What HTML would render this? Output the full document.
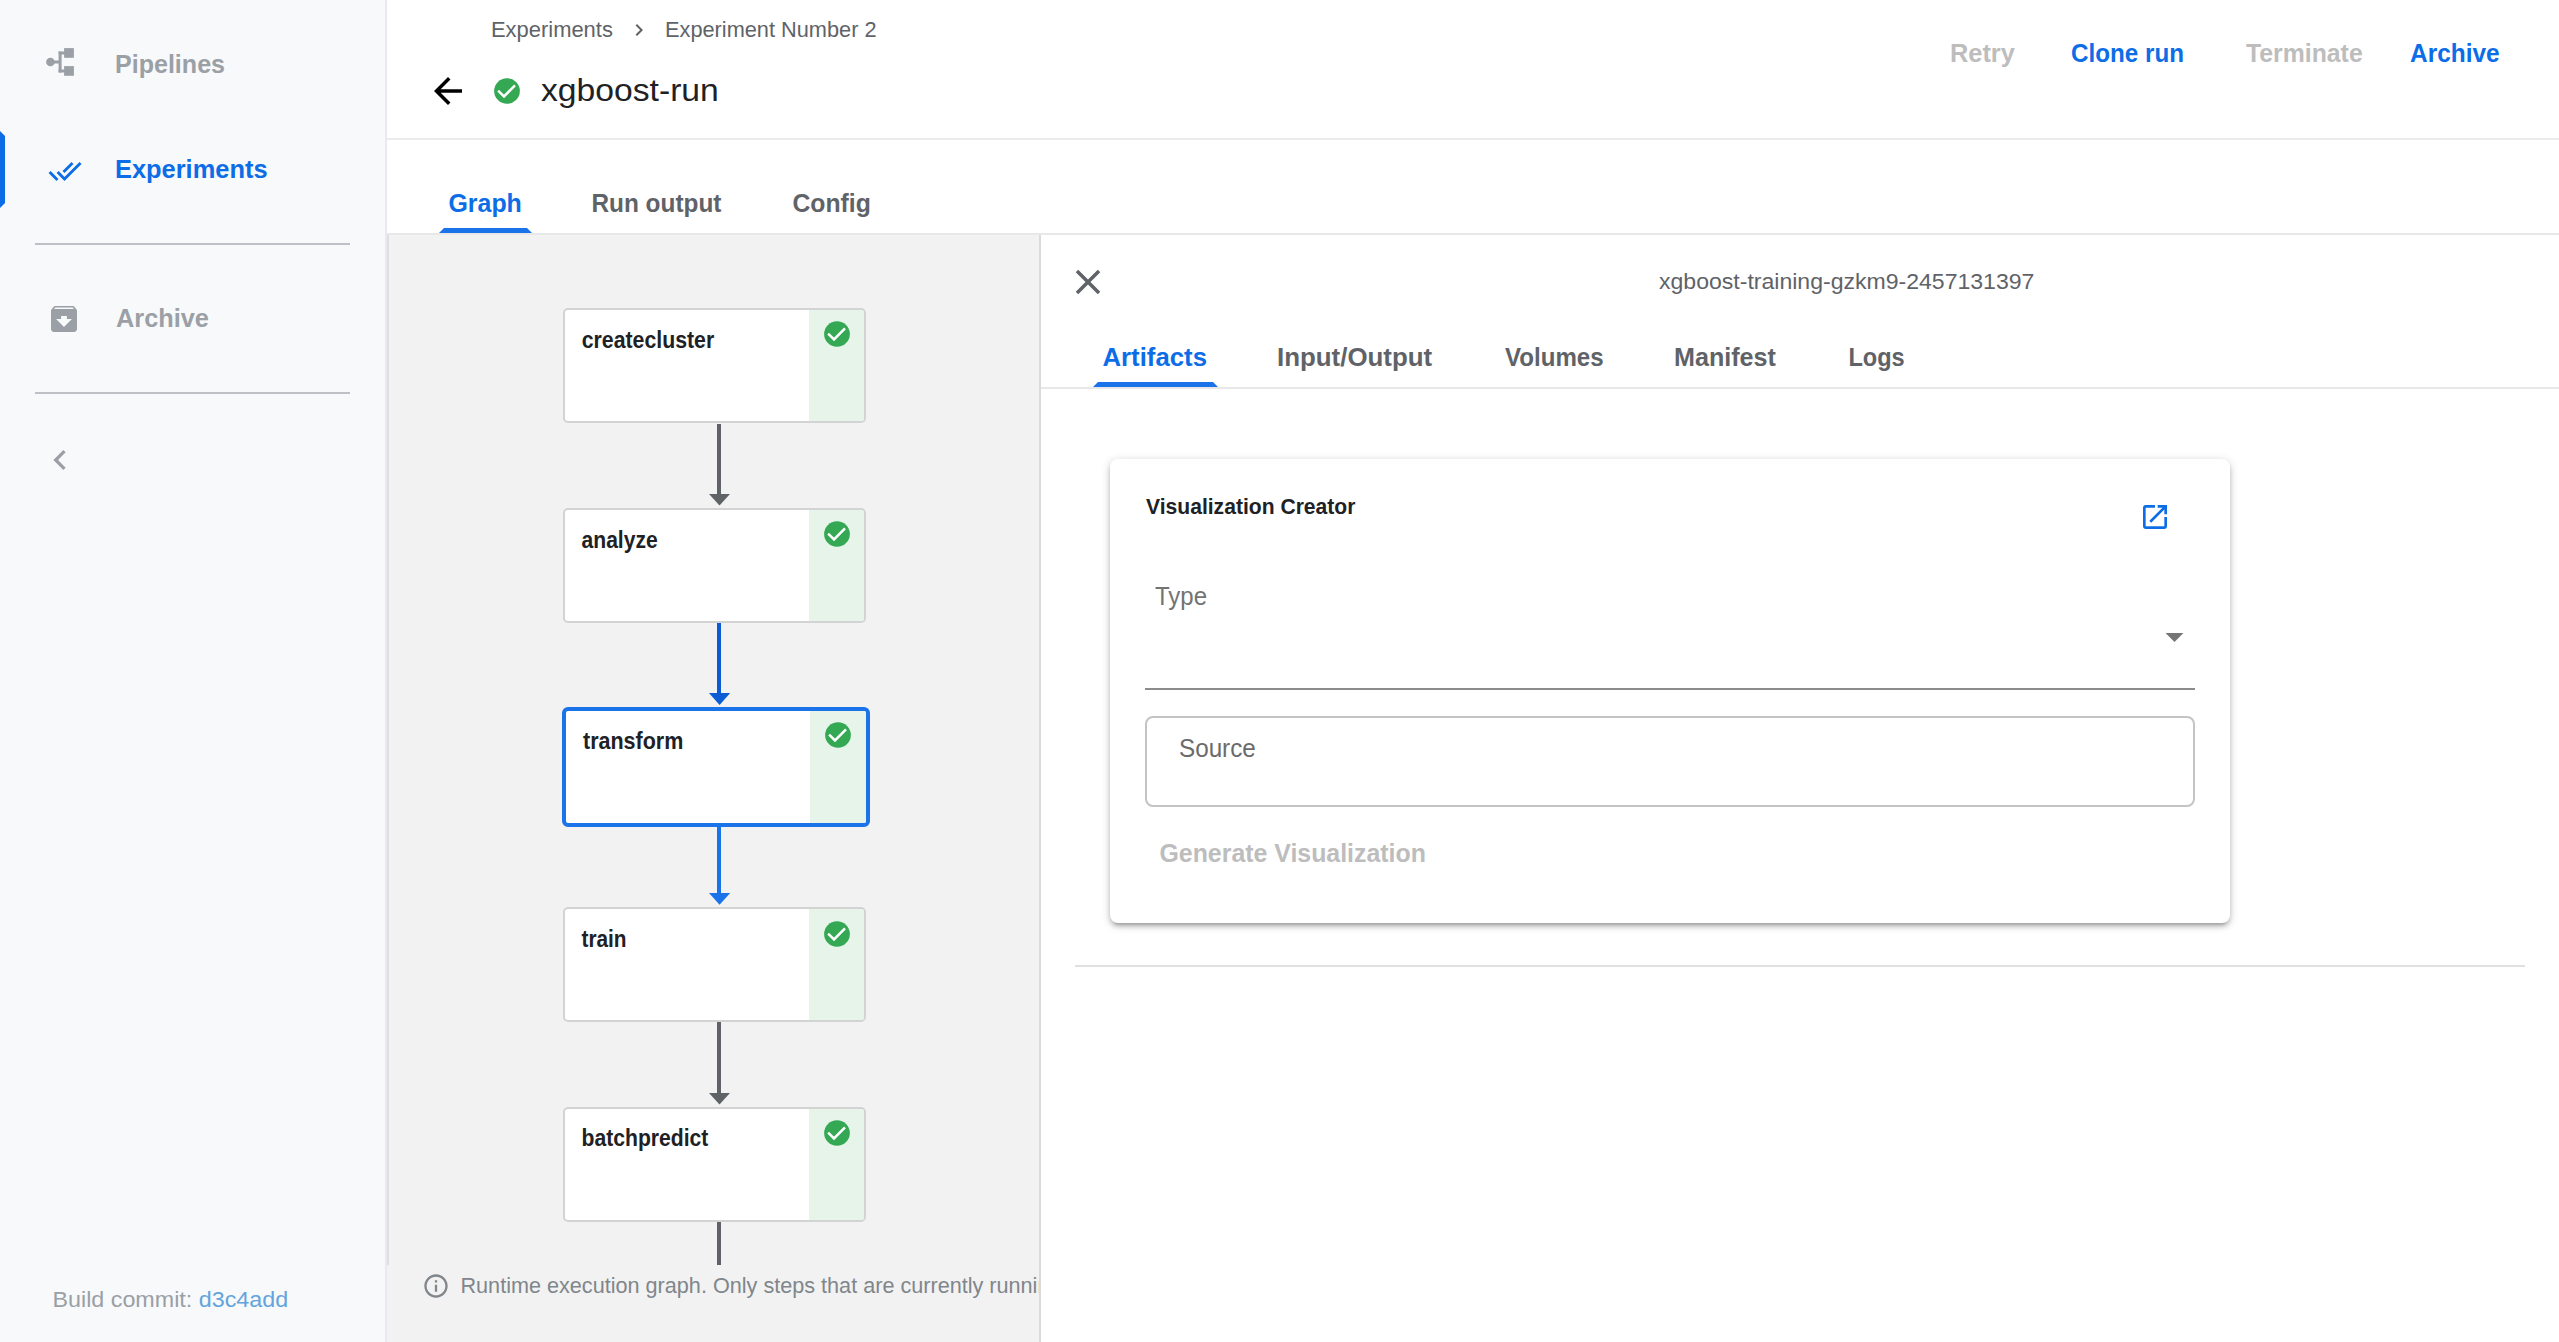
<!DOCTYPE html>
<html><head><meta charset="utf-8">
<style>
html,body{margin:0;padding:0;}
body{width:2559px;height:1342px;overflow:hidden;position:relative;background:#fff;font-family:"Liberation Sans",sans-serif;}
.a{position:absolute;}
.t{position:absolute;white-space:nowrap;line-height:1;transform-origin:0 85%;}
.b{font-weight:bold;}
svg{position:absolute;display:block;}
.node{width:299px;height:111px;border:2px solid #d3d3d3;border-radius:5px;background:#fff;overflow:hidden;}
.node.sel{width:300px;height:112px;border:4px solid #1a73e8;border-radius:6px;}
.node.sel .strip{width:56px;}
.strip{position:absolute;right:0;top:0;bottom:0;width:55px;background:#e6f4ea;}

</style></head><body>

<!-- SIDEBAR -->
<div class="a" style="left:0;top:0;width:385px;height:1342px;background:#f8f9fa;"></div>
<div class="a" style="left:385px;top:0;width:2px;height:1342px;background:#e8eaed;"></div>
<div class="a" style="left:0;top:131px;width:5px;height:77px;background:#0d6de7;clip-path:polygon(0 0,5px 5px,5px 72px,0 77px);"></div>

<!-- pipelines icon -->
<svg style="left:44px;top:46px" width="32" height="32" viewBox="44 46 32 32">
  <circle cx="50.4" cy="62" r="4.3" fill="#9aa0a6"/>
  <rect x="50" y="60.5" width="10" height="3" fill="#9aa0a6"/>
  <rect x="58.6" y="51.5" width="3" height="21" fill="#9aa0a6"/>
  <rect x="58.6" y="51.5" width="7" height="3" fill="#9aa0a6"/>
  <rect x="58.6" y="69.5" width="7" height="3" fill="#9aa0a6"/>
  <rect x="64.1" y="48.1" width="9.8" height="9.7" fill="#9aa0a6"/>
  <rect x="64.1" y="66.1" width="9.8" height="9.7" fill="#9aa0a6"/>
</svg>
<div class="t b" id="nav1" style="left:114.97px;top:51.87px;font-size:25.079px;color:#9aa0a6;transform:scaleY(1.0633);">Pipelines</div>

<!-- experiments icon -->
<svg style="left:47.5px;top:153.5px" width="34" height="34" viewBox="0 0 24 24">
  <path fill="#0d6de7" d="M18 7l-1.41-1.41-6.34 6.34 1.41 1.41L18 7zm4.24-1.41L11.66 16.17 7.48 12l-1.41 1.41L11.66 19l12-12-1.42-1.41zM.41 13.41L6 19l1.41-1.41L1.83 12 .41 13.41z"/>
</svg>
<div class="t b" id="nav2" style="left:114.98px;top:157.46px;font-size:25.436px;color:#0d6de7;transform:scaleY(1.0313);">Experiments</div>

<div class="a" style="left:35px;top:243px;width:315px;height:2px;background:#bdc1c6;"></div>

<!-- archive icon -->
<svg style="left:50.5px;top:306.4px" width="26" height="26" viewBox="3 3 18 18">
  <path fill="#9aa0a6" d="M20.54 5.23l-1.39-1.68C18.88 3.21 18.47 3 18 3H6c-.47 0-.88.21-1.16.55L3.46 5.23C3.17 5.57 3 6.02 3 6.5V19c0 1.1.9 2 2 2h14c1.1 0 2-.9 2-2V6.5c0-.48-.17-.93-.46-1.27zM12 17.5L6.5 12H10v-2h4v2h3.5L12 17.5zM5.12 5l.81-1h12l.94 1H5.12z"/>
</svg>
<div class="t b" id="nav3" style="left:116.00px;top:305.55px;font-size:25.339px;color:#9aa0a6;transform:scaleY(1.0295);">Archive</div>

<div class="a" style="left:35px;top:392px;width:315px;height:2px;background:#bdc1c6;"></div>

<!-- collapse chevron -->
<svg style="left:39.6px;top:440px" width="40" height="40" viewBox="0 0 24 24">
  <path fill="#9aa0a6" d="M15.41 7.41L14 6l-6 6 6 6 1.41-1.41L10.83 12z"/>
</svg>

<div class="t" id="build" style="left:52.49px;top:1288.17px;font-size:23.300px;color:#9aa0a6;transform:scaleY(0.9330);">Build commit: <span style="color:#64a4dc">d3c4add</span></div>

<!-- HEADER -->
<div class="a" style="left:387px;top:138px;width:2172px;height:2px;background:#ebebeb;"></div>
<div class="t" id="bc1" style="left:490.97px;top:18.61px;font-size:21.956px;color:#5f6368;transform:scaleY(0.9901);">Experiments</div>
<svg style="left:627px;top:18px" width="24" height="24" viewBox="0 0 24 24"><path fill="#5f6368" d="M10 6L8.59 7.41 13.17 12l-4.58 4.59L10 18l6-6z"/></svg>
<div class="t" id="bc2" style="left:665.00px;top:18.78px;font-size:21.756px;color:#5f6368;transform:scaleY(0.9992);">Experiment Number 2</div>

<svg style="left:427px;top:70px" width="42" height="42" viewBox="0 0 24 24"><path fill="#000" d="M20 11H7.83l5.59-5.59L12 4l-8 8 8 8 1.41-1.41L7.83 13H20v-2z"/></svg>
<svg style="left:494.4px;top:77.6px" width="26" height="26" viewBox="0 0 26 26"><circle cx="13" cy="13" r="12.85" fill="#34a853"/><polyline points="4.1,12.7 10.0,18.5 21.0,7.3" fill="none" stroke="#fff" stroke-width="2.5"/></svg>
<div class="t" id="title" style="left:541.00px;top:72.98px;font-size:33.683px;color:#202124;transform:scaleY(0.9419);">xgboost-run</div>

<div class="t b" id="btn1" style="left:1949.96px;top:41.19px;font-size:25.403px;color:#bdbdbd;transform:scaleY(1.0098);">Retry</div>
<div class="t b" id="btn2" style="left:2070.97px;top:42.19px;font-size:24.221px;color:#0d6de7;transform:scaleY(1.0591);">Clone run</div>
<div class="t b" id="btn3" style="left:2246.00px;top:41.70px;font-size:24.801px;color:#bdbdbd;transform:scaleY(1.0343);">Terminate</div>
<div class="t b" id="btn4" style="left:2410.00px;top:42.01px;font-size:24.439px;color:#0d6de7;transform:scaleY(1.0496);">Archive</div>

<!-- TABS -->
<div class="t b" id="tab1" style="left:448.47px;top:191.29px;font-size:24.927px;color:#0d6de7;transform:scaleY(1.0291);">Graph</div>
<div class="t b" id="tab2" style="left:591.48px;top:191.75px;font-size:24.384px;color:#5f6368;transform:scaleY(1.0520);">Run output</div>
<div class="t b" id="tab3" style="left:792.49px;top:192.44px;font-size:24.755px;color:#5f6368;transform:scaleY(1.0363);">Config</div>
<div class="a" style="left:439px;top:228px;width:93px;height:5px;background:#1a73e8;clip-path:polygon(5px 0,88px 0,93px 5px,0 5px);"></div>
<div class="a" style="left:387px;top:233px;width:2172px;height:2px;background:#e8e8e8;"></div>

<!-- GRAPH AREA -->
<div class="a" id="graph" style="left:387px;top:235px;width:652px;height:1107px;background:#f2f2f2;"></div>
<div class="a" style="left:387px;top:235px;width:2px;height:1030px;background:#dfdfdf;"></div>

<!-- nodes -->
<div class="a node" style="left:563px;top:308px;"><div class="strip"></div></div>
<div class="a node" style="left:563px;top:508px;"><div class="strip"></div></div>
<div class="a node sel" style="left:562px;top:707px;"><div class="strip"></div></div>
<div class="a node" style="left:563px;top:907px;"><div class="strip"></div></div>
<div class="a node" style="left:563px;top:1107px;"><div class="strip"></div></div>

<svg style="left:823.7px;top:321.2px" width="26" height="26" viewBox="0 0 26 26"><circle cx="13" cy="13" r="12.85" fill="#34a853"/><polyline points="4.1,12.7 10.0,18.5 21.0,7.3" fill="none" stroke="#fff" stroke-width="2.5"/></svg>
<svg style="left:823.7px;top:521.2px" width="26" height="26" viewBox="0 0 26 26"><circle cx="13" cy="13" r="12.85" fill="#34a853"/><polyline points="4.1,12.7 10.0,18.5 21.0,7.3" fill="none" stroke="#fff" stroke-width="2.5"/></svg>
<svg style="left:825.4px;top:722.0px" width="26" height="26" viewBox="0 0 26 26"><circle cx="13" cy="13" r="12.85" fill="#34a853"/><polyline points="4.1,12.7 10.0,18.5 21.0,7.3" fill="none" stroke="#fff" stroke-width="2.5"/></svg>
<svg style="left:823.7px;top:920.7px" width="26" height="26" viewBox="0 0 26 26"><circle cx="13" cy="13" r="12.85" fill="#34a853"/><polyline points="4.1,12.7 10.0,18.5 21.0,7.3" fill="none" stroke="#fff" stroke-width="2.5"/></svg>
<svg style="left:823.7px;top:1119.6px" width="26" height="26" viewBox="0 0 26 26"><circle cx="13" cy="13" r="12.85" fill="#34a853"/><polyline points="4.1,12.7 10.0,18.5 21.0,7.3" fill="none" stroke="#fff" stroke-width="2.5"/></svg>

<div class="t b" id="n1" style="left:581.75px;top:330.78px;font-size:21.281px;color:#202124;transform:scaleY(1.1018);">createcluster</div>
<div class="t b" id="n2" style="left:581.50px;top:529.91px;font-size:21.124px;color:#202124;transform:scaleY(1.1100);">analyze</div>
<div class="t b" id="n3" style="left:582.99px;top:731.69px;font-size:21.511px;color:#202124;transform:scaleY(1.1093);">transform</div>
<div class="t b" id="n4" style="left:581.49px;top:930.37px;font-size:20.826px;color:#202124;transform:scaleY(1.1259);">train</div>
<div class="t b" id="n5" style="left:581.51px;top:1127.84px;font-size:21.151px;color:#202124;transform:scaleY(1.1086);">batchpredict</div>

<!-- edges -->
<svg style="left:700px;top:420px" width="40" height="850" viewBox="700 420 40 850">
  <rect x="717" y="424" width="4" height="71" fill="#5f6368"/>
  <path d="M709 494 L730 494 L719.5 505.5 Z" fill="#5f6368"/>
  <rect x="717" y="623" width="4" height="71" fill="#0b5cd5"/>
  <path d="M709 693 L730.2 693 L719.6 705 Z" fill="#0b5cd5"/>
  <rect x="717" y="826" width="4" height="68" fill="#1a73e8"/>
  <path d="M709 893 L730.2 893 L719.6 904.8 Z" fill="#1a73e8"/>
  <rect x="717" y="1022" width="4" height="72" fill="#5f6368"/>
  <path d="M709 1093 L730 1093 L719.5 1104.5 Z" fill="#5f6368"/>
  <rect x="717" y="1222" width="4" height="43" fill="#5f6368"/>
</svg>

<svg style="left:422px;top:1272px" width="28" height="28" viewBox="0 0 24 24"><path fill="#80868b" d="M11 7h2v2h-2zm0 4h2v6h-2zm1-9C6.48 2 2 6.48 2 12s4.48 10 10 10 10-4.48 10-10S17.520 2 12 2zm0 18c-4.41 0-8-3.59-8-8s3.590-8 8-8 8 3.59 8 8-3.59 8-8 8z"/></svg>
<div class="a" style="left:387px;top:1265px;width:652px;height:77px;overflow:hidden;">
  <div class="t" id="info" style="left:73.47px;top:10.43px;font-size:21.640px;color:#80868b;transform:scaleY(0.9778);">Runtime execution graph. Only steps that are currently running or have already completed are shown.</div>
</div>

<!-- SIDE PANEL -->
<div class="a" id="side" style="left:1041px;top:235px;width:1518px;height:1107px;background:#fff;"></div>
<div class="a" style="left:1039px;top:235px;width:2px;height:1107px;background:#dadada;"></div>

<svg style="left:1067px;top:261px" width="42" height="42" viewBox="0 0 24 24"><path fill="#5f6368" d="M19 6.41L17.59 5 12 10.59 6.41 5 5 6.41 10.59 12 5 17.590 6.41 19 12 13.41 17.59 19 19 17.59 13.41 12z"/></svg>
<div class="t" id="stitle" style="left:1659.00px;top:270.07px;font-size:23.069px;color:#5f6368;transform:scaleY(0.9507);">xgboost-training-gzkm9-2457131397</div>

<div class="t b" id="st1" style="left:1102.50px;top:344.80px;font-size:25.750px;color:#0d6de7;transform:scaleY(1.0131);">Artifacts</div>
<div class="t b" id="st2" style="left:1277.00px;top:344.68px;font-size:25.885px;color:#5f6368;transform:scaleY(1.0078);">Input/Output</div>
<div class="t b" id="st3" style="left:1505.00px;top:346.21px;font-size:24.082px;color:#5f6368;transform:scaleY(1.0833);">Volumes</div>
<div class="t b" id="st4" style="left:1673.99px;top:345.31px;font-size:25.149px;color:#5f6368;transform:scaleY(1.0373);">Manifest</div>
<div class="t b" id="st5" style="left:1848.46px;top:346.66px;font-size:23.551px;color:#5f6368;transform:scaleY(1.1077);">Logs</div>
<div class="a" style="left:1093px;top:382px;width:125px;height:5px;background:#1a73e8;clip-path:polygon(5px 0,120px 0,125px 5px,0 5px);"></div>
<div class="a" style="left:1041px;top:387px;width:1518px;height:2px;background:#e8e8e8;"></div>

<!-- card -->
<div class="a" id="card" style="left:1110px;top:459px;width:1120px;height:464px;background:#fff;border-radius:8px;box-shadow:0 2px 10px rgba(0,0,0,.2),0 4px 4px rgba(0,0,0,.14),0 6px 2px -4px rgba(0,0,0,.12);"></div>
<div class="t b" id="vc" style="left:1146.00px;top:495.53px;font-size:21.101px;color:#202124;transform:scaleY(1.0509);">Visualization Creator</div>
<svg style="left:2139px;top:501px" width="32" height="32" viewBox="0 0 24 24"><path fill="#0d6de7" d="M19 19H5V5h7V3H5c-1.11 0-2 .9-2 2v14c0 1.1.89 2 2 2h14c1.1 0 2-.9 2-2v-7h-2v7zM14 3v2h3.59l-9.83 9.83 1.41 1.41L19 6.41V10h2V3h-7z"/></svg>
<div class="t" id="type" style="left:1154.99px;top:585.15px;font-size:24.039px;color:#737373;transform:scaleY(1.0370);">Type</div>
<svg style="left:2153px;top:615px" width="43" height="43" viewBox="0 0 24 24"><path fill="#757575" d="M7 10l5 5 5-5z"/></svg>
<div class="a" style="left:1145px;top:688px;width:1050px;height:2px;background:#8c8c8c;"></div>
<div class="a" style="left:1145px;top:716px;width:1046px;height:87px;border:2px solid #c4c4c4;border-radius:8px;"></div>
<div class="t" id="source" style="left:1178.98px;top:736.65px;font-size:24.268px;color:#6b6b6b;transform:scaleY(1.0690);">Source</div>
<div class="t b" id="gen" style="left:1159.49px;top:840.53px;font-size:24.888px;color:#bdbdbd;transform:scaleY(1.0424);">Generate Visualization</div>

<div class="a" style="left:1075px;top:965px;width:1450px;height:2px;background:#e0e0e0;"></div>

</body></html>
